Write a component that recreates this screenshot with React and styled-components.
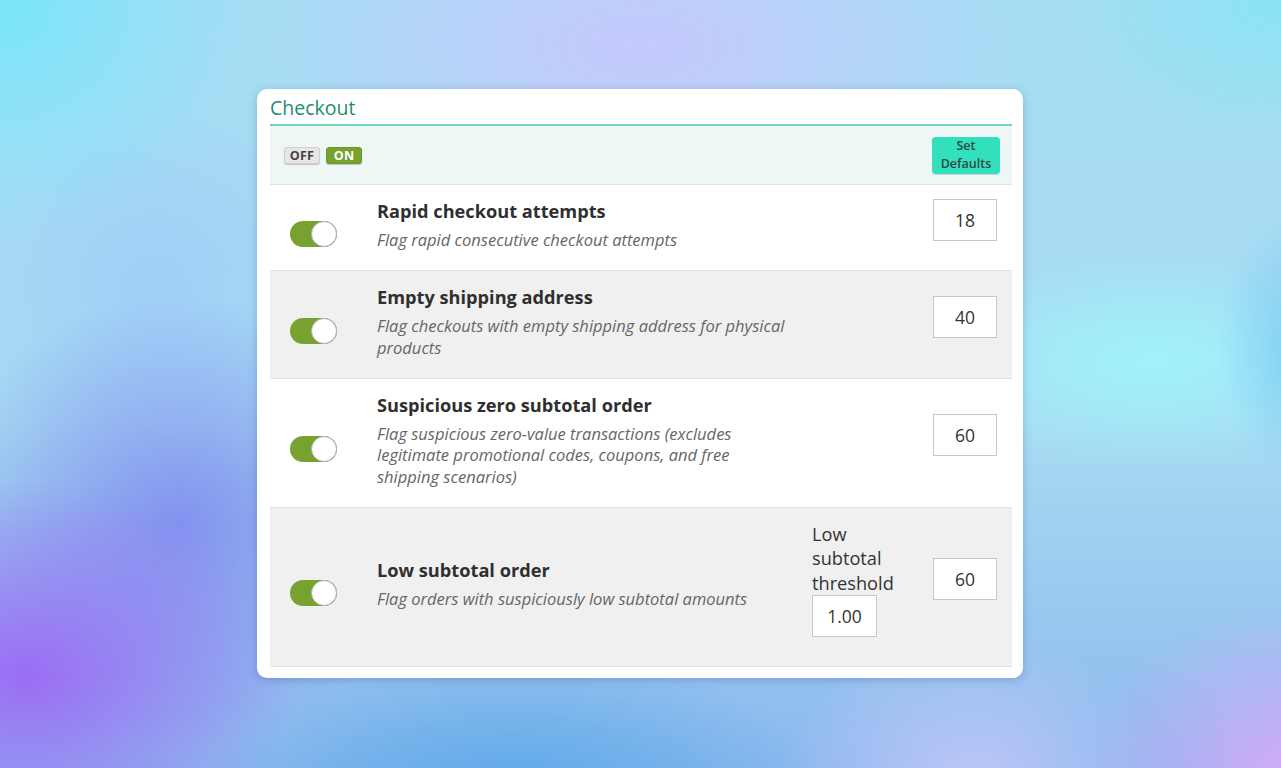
import React from "react";
import styled, { createGlobalStyle } from "styled-components";

const Global = createGlobalStyle`
  html, body { margin: 0; padding: 0; }
  body {
    width: 1281px;
    height: 768px;
    overflow: hidden;
    font-family: "Open Sans", "Noto Sans", sans-serif;
    background:
      radial-gradient(ellipse 360px 260px at 2% 88%, rgba(155, 108, 244, 1), rgba(155,108,244,0) 75%),
      radial-gradient(ellipse 340px 300px at 14% 68%, rgba(125, 135, 238, 0.85), rgba(125,135,238,0) 75%),
      radial-gradient(ellipse 420px 200px at 40% 104%, rgba(88, 168, 232, 0.95), rgba(88,168,232,0) 75%),
      radial-gradient(ellipse 300px 240px at 102% 102%, rgba(218, 168, 248, 1), rgba(218,168,248,0) 75%),
      radial-gradient(ellipse 260px 200px at 76% 102%, rgba(196, 200, 250, 0.9), rgba(196,200,250,0) 75%),
      radial-gradient(ellipse 120px 180px at 102% 45%, rgba(112, 196, 242, 0.75), rgba(112,196,242,0) 75%),
      radial-gradient(ellipse 330px 140px at 90% 47%, rgba(160, 244, 252, 0.95), rgba(160,244,252,0) 75%),
      radial-gradient(ellipse 520px 260px at 50% 6%, rgba(198, 200, 252, 1), rgba(198,200,252,0) 72%),
      radial-gradient(ellipse 340px 320px at 0% 0%, rgba(122, 230, 250, 1), rgba(122,230,250,0) 75%),
      radial-gradient(ellipse 300px 200px at 100% 0%, rgba(138, 228, 242, 1), rgba(138,228,242,0) 75%),
      radial-gradient(ellipse 260px 260px at 12% 38%, rgba(160, 205, 248, 0.9), rgba(160,205,248,0) 75%),
      linear-gradient(180deg, #a6dcf4 0%, #a8dcf2 55%, #8cb8ee 100%);
  }
`;

const Stage = styled.div`
  width: 1281px;
  height: 768px;
  display: flex;
  justify-content: flex-start;
  align-items: flex-start;
  padding: 89px 0 0 257px;
  box-sizing: border-box;
`;

const Card = styled.div`
  width: 766px;
  box-sizing: border-box;
  background: #fff;
  border-radius: 10px;
  padding: 0 11px 11px 13px;
  box-shadow: 0 2px 8px rgba(40, 60, 120, 0.25);
`;

const Title = styled.h2`
  margin: 0;
  height: 34px;
  display: flex;
  align-items: center;
  font-size: 19.5px;
  font-weight: 400;
  color: #1f8c6c;
  border-bottom: 2px solid #6fd7c1;
  padding-top: 1px;
`;

const HeaderBar = styled.div`
  height: 59px;
  background: #eef7f5;
  border-bottom: 1px solid #e2e2e2;
  display: flex;
  align-items: center;
  justify-content: space-between;
  padding: 0 12px 0 14px;
  box-sizing: border-box;
`;

const SwitchGroup = styled.div`
  display: flex;
  gap: 6px;
  margin-top: 1px;
`;

const Pill = styled.span`
  display: inline-flex;
  align-items: center;
  justify-content: center;
  height: 17px;
  min-width: 36px;
  padding: 0 4px;
  box-sizing: border-box;
  border-radius: 3px;
  font-size: 12.5px;
  font-weight: 700;
  letter-spacing: 0.2px;
  background: ${(p) => (p.$on ? "#78a22f" : "#e6e6e6")};
  color: ${(p) => (p.$on ? "#ffffff" : "#444")};
  border: 1px solid ${(p) => (p.$on ? "#6f9728" : "#cfcfcf")};
  box-shadow: 0 1px 1px rgba(0, 0, 0, 0.2);
`;

const DefaultsButton = styled.button`
  width: 68px;
  height: 37px;
  border: none;
  border-radius: 4px;
  background: #33e0bd;
  color: #2d4844;
  font-family: "Open Sans", sans-serif;
  font-size: 12.5px;
  font-weight: 600;
  line-height: 18px;
  padding: 0;
  box-shadow: 0 1px 1px rgba(0, 0, 0, 0.15);
`;

const Row = styled.div`
  display: grid;
  grid-template-columns: 92px 435px 121px 94px;
  align-items: center;
  background: ${(p) => (p.$alt ? "#f0f0f0" : "#ffffff")};
  border-bottom: 1px solid #e2e2e2;
  padding: 14px 0 14.5px;
`;

const ToggleCell = styled.div`
  padding-left: 20px;
  margin-top: 13px;
`;

const Toggle = styled.div`
  width: 47px;
  height: 26px;
  border-radius: 13px;
  background: #78a22f;
  position: relative;
  &::after {
    content: "";
    position: absolute;
    right: 0;
    top: 0;
    width: 24px;
    height: 24px;
    border-radius: 50%;
    background: #fff;
    border: 1px solid #b0b0b0;
  }
`;

const TextCell = styled.div`
  padding-left: 15px;
  padding-bottom: 5px;
`;

const RuleTitle = styled.div`
  font-size: 18.2px;
  font-weight: 700;
  color: #2f2f2f;
  line-height: 24px;
  margin-bottom: 6px;
`;

const RuleDesc = styled.div`
  font-size: 16.5px;
  font-style: italic;
  color: #666;
  line-height: 21.5px;
  max-width: 414px;
`;

const ExtraCell = styled.div`
  padding-left: 15px;
`;

const ExtraLabel = styled.div`
  font-size: 18.2px;
  color: #333;
  line-height: 24.5px;
  width: 92px;
`;

const ValueCell = styled.div`
  padding-left: 15px;
`;

const NumberBox = styled.div`
  width: ${(p) => p.$w || "64px"};
  height: 42px;
  box-sizing: border-box;
  border: 1px solid #c6c6c6;
  background: #fff;
  display: flex;
  align-items: center;
  justify-content: center;
  font-size: 17.5px;
  color: #333;
  margin-bottom: 14px;
`;

const rules = [
  {
    title: "Rapid checkout attempts",
    desc: "Flag rapid consecutive checkout attempts",
    value: "18",
  },
  {
    title: "Empty shipping address",
    desc: "Flag checkouts with empty shipping address for physical products",
    value: "40",
    alt: true,
  },
  {
    title: "Suspicious zero subtotal order",
    desc: "Flag suspicious zero-value transactions (excludes legitimate promotional codes, coupons, and free shipping scenarios)",
    value: "60",
  },
  {
    title: "Low subtotal order",
    desc: "Flag orders with suspiciously low subtotal amounts",
    value: "60",
    alt: true,
    threshold: "1.00",
  },
];

export default function App() {
  return (
    <>
      <Global />
      <Stage>
        <Card>
          <Title>Checkout</Title>
          <HeaderBar>
            <SwitchGroup>
              <Pill>OFF</Pill>
              <Pill $on>ON</Pill>
            </SwitchGroup>
            <DefaultsButton>
              Set
              <br />
              Defaults
            </DefaultsButton>
          </HeaderBar>
          {rules.map((r) => (
            <Row key={r.title} $alt={r.alt}>
              <ToggleCell>
                <Toggle />
              </ToggleCell>
              <TextCell>
                <RuleTitle>{r.title}</RuleTitle>
                <RuleDesc>{r.desc}</RuleDesc>
              </TextCell>
              <ExtraCell>
                {r.threshold && (
                  <>
                    <ExtraLabel>Low subtotal threshold</ExtraLabel>
                    <NumberBox $w="65px">{r.threshold}</NumberBox>
                  </>
                )}
              </ExtraCell>
              <ValueCell>
                <NumberBox>{r.value}</NumberBox>
              </ValueCell>
            </Row>
          ))}
        </Card>
      </Stage>
    </>
  );
}
